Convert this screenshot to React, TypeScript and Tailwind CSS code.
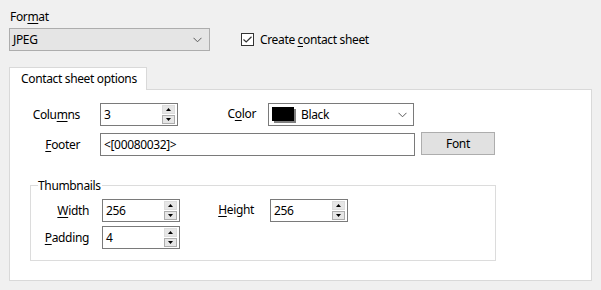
import React from "react";

const font = { fontFamily: '"Segoe UI", "Noto Sans", "Open Sans", sans-serif' };

function Chevron() {
  return (
    <svg width="9" height="6" viewBox="0 0 9 6" className="block">
      <path d="M0.5 0.8 L4.5 4.8 L8.5 0.8" fill="none" stroke="#5a5a5a" strokeWidth="1" />
    </svg>
  );
}

function Spin({ value, w = "w-[78px]" }: { value: string; w?: string }) {
  return (
    <div className={`${w} h-[23px] border border-[#7a7a7a] bg-white flex items-center justify-between pl-[3px] pr-[2px]`}>
      <span>{value}</span>
      <div className="flex flex-col gap-[1px]">
        <div className="w-[13px] h-[9px] bg-[#e6e6e6] border border-[#dcdcdc] flex items-center justify-center">
          <svg width="5" height="3" viewBox="0 0 5 3"><path d="M2.5 0 L5 3 L0 3 Z" fill="#000" /></svg>
        </div>
        <div className="w-[13px] h-[9px] bg-[#e6e6e6] border border-[#adadad] flex items-center justify-center">
          <svg width="5" height="3" viewBox="0 0 5 3"><path d="M0 0 L5 0 L2.5 3 Z" fill="#000" /></svg>
        </div>
      </div>
    </div>
  );
}

function U({ children }: { children: React.ReactNode }) {
  return <span className="underline underline-offset-[2px] decoration-[1px]">{children}</span>;
}

export default function App() {
  return (
    <div className="w-[601px] h-[290px] bg-[#f0f0f0] text-[12px] leading-[15px] tracking-[-0.35px] text-black relative overflow-hidden" style={font}>
      <div className="pl-[10px] pt-[9px] h-[28px]">
        For<U>m</U>at
      </div>
      <div className="flex items-center pl-[9px] h-[23px]">
        <div className="w-[201px] h-[23px] bg-[#e5e5e5] border border-[#adadad] flex items-center justify-between pl-[3px] pr-[7px]">
          <span>JPEG</span>
          <Chevron />
        </div>
        <div className="ml-[31px] flex items-center gap-[6px]">
          <div className="w-[13px] h-[13px] border border-[#333333] bg-white flex items-center justify-center">
            <svg width="9" height="7" viewBox="0 0 9 7"><path d="M0.5 3.5 L3.2 6 L8.5 0.8" fill="none" stroke="#333" strokeWidth="1.2" /></svg>
          </div>
          <span>Create <U>c</U>ontact sheet</span>
        </div>
      </div>
      <div className="pl-[9px] pt-[16px]">
        <div className="w-[138px] h-[23px] bg-white border border-[#d9d9d9] border-b-0 relative z-10 pl-[11px] pt-[3px]">
          Contact sheet options
        </div>
        <div className="w-[583px] h-[192px] bg-white border border-[#d9d9d9] -mt-[1px]">
          <div className="flex items-center mt-[13px] h-[23px]">
            <div className="w-[70px] text-right">Colu<U>m</U>ns</div>
            <div className="ml-[20px]"><Spin value="3" /></div>
            <div className="w-[78px] text-right -mt-[3px]">C<U>o</U>lor</div>
            <div className="ml-[12px] w-[146px] h-[23px] border border-[#7a7a7a] bg-white flex items-center justify-between pl-[3px] pr-[6px]">
              <div className="flex items-center gap-[5px]">
                <div className="relative w-[24px] h-[16px]">
                  <div className="absolute left-[2px] top-[2px] w-[22px] h-[14px] bg-[#808080]" />
                  <div className="absolute left-0 top-0 w-[22px] h-[14px] bg-black" />
                </div>
                <span>Black</span>
              </div>
              <Chevron />
            </div>
          </div>
          <div className="flex items-center mt-[7px] h-[23px]">
            <div className="w-[70px] text-right"><U>F</U>ooter</div>
            <div className="ml-[20px] w-[315px] h-[23px] border border-[#7a7a7a] bg-white flex items-center pl-[3px]">&lt;[00080032]&gt;</div>
            <div className="ml-[6px] w-[74px] h-[23px] -mt-[2px] bg-[#e1e1e1] border border-[#adadad] flex items-center justify-center">Font</div>
          </div>
          <div className="ml-[20px] mt-[29px] w-[466px] h-[76px] border border-[#dcdcdc] relative">
            <div className="absolute left-[7px] -top-[8px] bg-white pr-[1px]">Thumbnails</div>
            <div className="flex items-center mt-[13px] h-[23px]">
              <div className="w-[58px] text-right"><U>W</U>idth</div>
              <div className="ml-[13px]"><Spin value="256" /></div>
              <div className="w-[74px] text-right -mt-[2px]"><U>H</U>eight</div>
              <div className="ml-[16px]"><Spin value="256" /></div>
            </div>
            <div className="flex items-center mt-[4px] h-[23px]">
              <div className="w-[58px] text-right"><U>P</U>adding</div>
              <div className="ml-[13px]"><Spin value="4" /></div>
            </div>
          </div>
        </div>
      </div>
    </div>
  );
}
